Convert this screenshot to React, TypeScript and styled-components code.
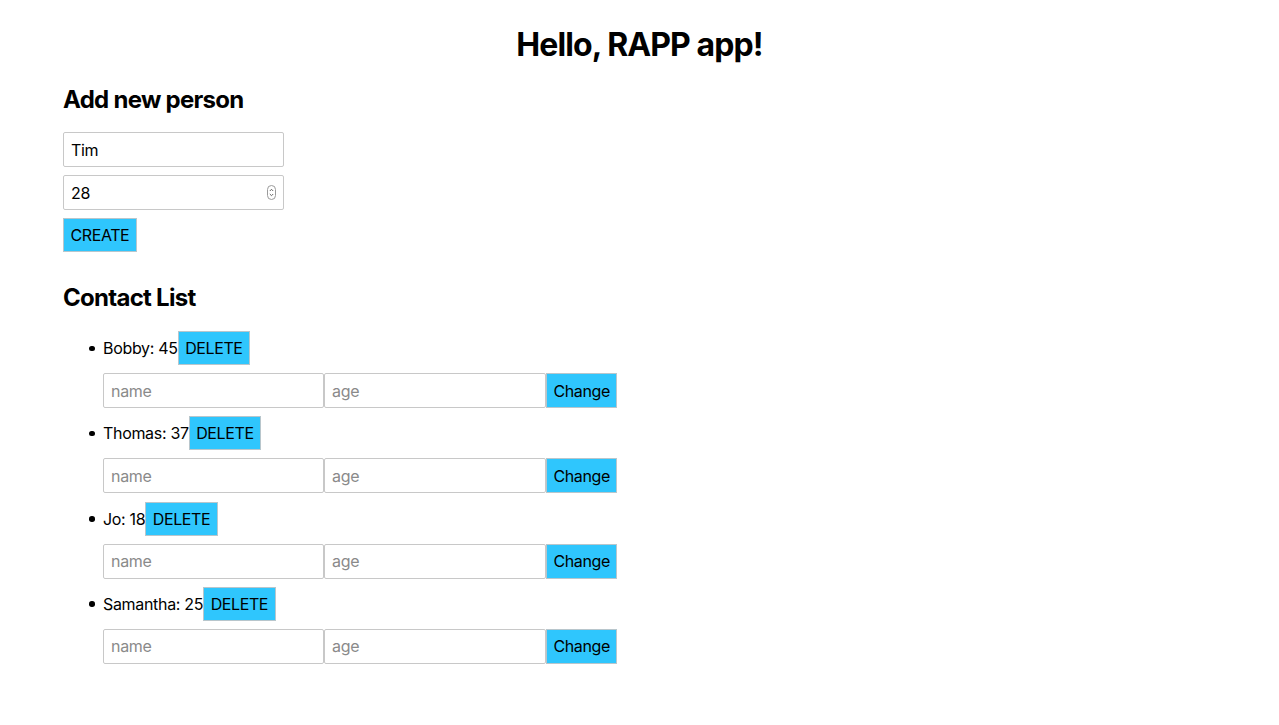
import React, { useState } from "react";
import styled, { createGlobalStyle } from "styled-components";

const Global = createGlobalStyle`
  body { margin: 0; background: #fff; color: #000; font-family: Inter, "Noto Sans", sans-serif; letter-spacing: -0.02em; }
  * { box-sizing: border-box; }
`;

const Page = styled.div`
  padding: 0 63px;
`;

const Title = styled.h1`
  text-align: center;
  font-size: 32px;
  font-weight: 700;
  margin: 26px 0 0;
  line-height: 38px;
  letter-spacing: -0.028em;
`;

const Heading = styled.h2<{ $top?: number }>`
  font-size: 24px;
  font-weight: 700;
  margin: ${(p) => p.$top ?? 0}px 0 0;
  line-height: 30px;
  letter-spacing: -0.03em;
`;

const Form = styled.div`
  display: flex;
  flex-direction: column;
  align-items: flex-start;
  gap: 8px;
  margin: 17px 0 31px;
`;

const Input = styled.input<{ $w?: number }>`
  width: ${(p) => p.$w ?? 221}px;
  height: 35px;
  border: 1px solid #c8c8c8;
  border-radius: 2px;
  padding: 0 7px;
  font-family: Inter, "Noto Sans", sans-serif;
  font-size: 16px;
  letter-spacing: -0.02em;
  color: #000;
  outline: none;
  &::placeholder { color: #8a8a8a; }
  &::-webkit-inner-spin-button { display: none; }
`;

const NumberWrap = styled.div`
  position: relative;
  display: inline-block;
`;

const Spinner = styled.svg`
  position: absolute;
  right: 8px;
  top: 10px;
  pointer-events: none;
`;

const Button = styled.button<{ $h?: number }>`
  height: ${(p) => p.$h ?? 34}px;
  background: #2fc6fd;
  border: 1px solid #b8c6cc;
  padding: 0 6.5px;
  font-family: Inter, "Noto Sans", sans-serif;
  font-size: 16px;
  letter-spacing: -0.025em;
  color: #000;
  cursor: pointer;
`;

const List = styled.ul`
  margin: 18px 0 0;
  padding-left: 40px;
  list-style: none;
  display: flex;
  flex-direction: column;
  gap: 8.33px;
`;

const Item = styled.li`
  font-size: 16px;
`;

const ItemLine = styled.div`
  position: relative;
  display: flex;
  align-items: center;
  height: 34px;
  &::before {
    content: "";
    position: absolute;
    left: -14px;
    top: 50%;
    width: 5.5px;
    height: 5.5px;
    margin-top: -2.5px;
    border-radius: 50%;
    background: #000;
  }
`;

const EditRow = styled.div`
  display: flex;
  margin-top: 8px;
`;

const initial = [
  { name: "Bobby", age: 45 },
  { name: "Thomas", age: 37 },
  { name: "Jo", age: 18 },
  { name: "Samantha", age: 25 },
];

export default function App() {
  const [name, setName] = useState("Tim");
  const [age, setAge] = useState("28");
  return (
    <Page>
      <Global />
      <Title>Hello, RAPP app!</Title>
      <Heading $top={21}>Add new person</Heading>
      <Form>
        <Input value={name} onChange={(e) => setName(e.target.value)} />
        <NumberWrap>
          <Input type="number" value={age} onChange={(e) => setAge(e.target.value)} />
          <Spinner width="9" height="15" viewBox="0 0 9 15">
            <rect x="0.5" y="0.5" width="8" height="14" rx="4" fill="#fff" stroke="#9a9a9a" />
            <path d="M2.8 6 L4.5 4.3 L6.2 6" fill="none" stroke="#555" strokeWidth="0.9" />
            <path d="M2.8 9 L4.5 10.7 L6.2 9" fill="none" stroke="#555" strokeWidth="0.9" />
          </Spinner>
        </NumberWrap>
        <Button>CREATE</Button>
      </Form>
      <Heading>Contact List</Heading>
      <List>
        {initial.map((p) => (
          <Item key={p.name}>
            <ItemLine>
              <span>
                {p.name}: {p.age}
              </span>
              <Button>DELETE</Button>
            </ItemLine>
            <EditRow>
              <Input placeholder="name" />
              <Input placeholder="age" $w={222} />
              <Button $h={35}>Change</Button>
            </EditRow>
          </Item>
        ))}
      </List>
    </Page>
  );
}
